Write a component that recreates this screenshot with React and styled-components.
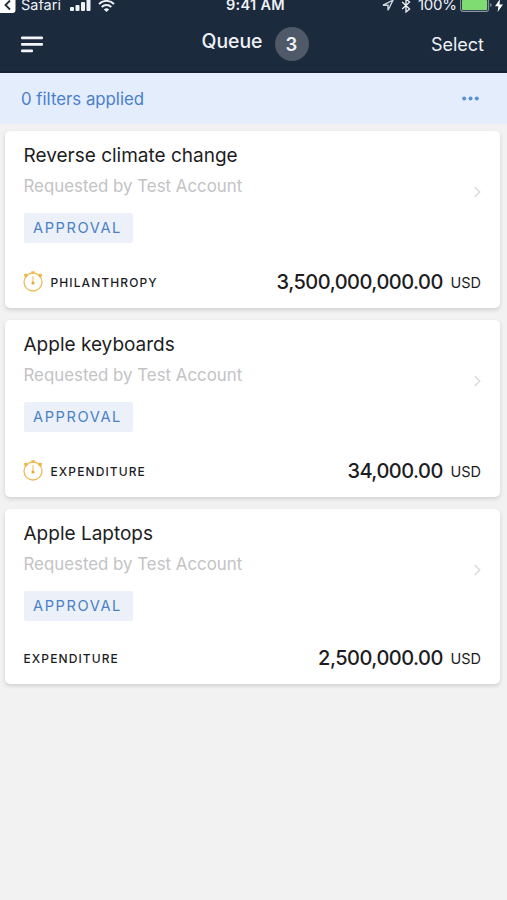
import styled, { createGlobalStyle } from 'styled-components';

const GlobalStyle = createGlobalStyle`
  * {
    box-sizing: border-box;
  }

  body {
    margin: 0;
    background: #f2f2f2;
    color: #1d1d1f;
    font-family: Inter, 'Liberation Sans', sans-serif;
  }

  svg {
    display: block;
    flex-shrink: 0;
  }
`;

const StyledPage = styled.div`
  min-height: 900px;
  overflow: hidden;
`;

const StyledHeader = styled.header`
  background: #1b2a3d;
  border-bottom: 2px solid #152233;
  color: #eef1f6;
  height: 73px;
`;

const StyledStatus = styled.div`
  align-items: center;
  display: grid;
  font-size: 15px;
  grid-template-columns: 226px 156px 1fr;
  grid-template-rows: 10px;
  height: 10px;
  line-height: 18px;
  white-space: nowrap;

  div {
    align-items: center;
    display: flex;
    height: 10px;
  }
`;

const StatusText = styled.span`
  font-size: ${({ $size }) => $size || 15}px;
  font-weight: ${({ $bold }) => ($bold ? 600 : 400)};
  letter-spacing: ${({ $spacing }) => $spacing || 0}px;
  margin-left: ${({ $left }) => $left || 0}px;
  width: ${({ $width }) => $width}px;
`;

const StatusIcon = styled.svg`
  margin-left: ${({ $left }) => $left || 0}px;
`;

const StyledNav = styled.nav`
  align-items: center;
  display: grid;
  grid-template-columns: 1fr auto 1fr;
  height: 58px;
  margin-top: 5px;
  padding: 0 23px 0 21px;
`;

const StyledTitle = styled.h1`
  align-items: center;
  display: flex;
  font-size: 19.4px;
  font-weight: 500;
  gap: 12px;
  line-height: 24px;
  margin: 0 0 0 5px;

  span {
    padding-bottom: 6px;
  }
`;

const Count = styled.b`
  background: #4f5967;
  border-radius: 50%;
  font-size: 18.5px;
  font-weight: 600;
  height: 34px;
  line-height: 34px;
  text-align: center;
  width: 34px;
`;

const SelectButton = styled.button`
  background: none;
  border: 0;
  color: inherit;
  font: 400 18px/24px Inter, sans-serif;
  justify-self: end;
  padding: 1px 0 0;
`;

const StyledFilters = styled.div`
  align-items: center;
  background: #e4edfc;
  color: #4a80cb;
  display: flex;
  font-size: 16.8px;
  height: 51px;
  justify-content: space-between;
  padding: 0 28px 0 21px;
`;

const StyledList = styled.main`
  display: grid;
  gap: 12px;
  padding: 7px 7px 0 5px;
`;

const StyledCard = styled.article`
  background: #fff;
  border-radius: 5px;
  box-shadow: 0 2px 4px rgba(0, 0, 0, 0.14);
  height: ${({ $short }) => ($short ? 175 : 177)}px;
  padding: 12px 19px 0 18.5px;
`;

const CardTop = styled.div`
  align-items: center;
  display: flex;
  height: 100px;
  justify-content: space-between;

  h2 {
    font-size: 19px;
    font-weight: 400;
    line-height: 24px;
    margin: 0;
  }

  p {
    color: #c3c3c5;
    font-size: 16.85px;
    line-height: 22px;
    margin: 7px 0 16px;
  }
`;

const Chevron = styled.svg`
  margin-bottom: 3px;
`;

const Tag = styled.span`
  background: #ebf0f9;
  border-radius: 2px;
  color: #4a80c4;
  display: block;
  font-size: 14.6px;
  height: 30px;
  letter-spacing: 1.6px;
  line-height: 30px;
  padding-left: 9.5px;
  width: 109px;
`;

const CardBottom = styled.div`
  align-items: center;
  display: flex;
  height: 24px;
  margin-top: ${({ $short }) => ($short ? 25 : 27)}px;
`;

const Category = styled.span`
  font-size: 12px;
  font-weight: 500;
  letter-spacing: 1.1px;
`;

const Amount = styled.strong`
  font-size: 20px;
  font-weight: 500;
  letter-spacing: -0.5px;
  margin-left: auto;
`;

const Currency = styled.span`
  font-size: 14.5px;
  font-weight: 400;
  margin-left: 7.5px;
`;

const requests = [
  {
    title: 'Reverse climate change',
    category: 'PHILANTHROPY',
    amount: '3,500,000,000.00',
    timed: true,
  },
  {
    title: 'Apple keyboards',
    category: 'EXPENDITURE',
    amount: '34,000.00',
    timed: true,
  },
  {
    title: 'Apple Laptops',
    category: 'EXPENDITURE',
    amount: '2,500,000.00',
    timed: false,
  },
];

const StyledStopwatch = styled.svg`
  margin: -2px 8px 0 -1px;
`;

const Stopwatch = () => (
  <StyledStopwatch width="20" height="22" viewBox="0 0 20 22" fill="none">
    <circle cx="10" cy="12" r="9" stroke="#edbc58" strokeWidth="1.3" />
    <path d="M10 6v6" stroke="#edbc58" strokeWidth="1" />
    <circle cx="10" cy="13" r="1.6" fill="#e5a935" />
    <path d="M8.3 2h3.4M10 2v2" stroke="#edb64c" strokeWidth="1.6" />
    <path d="M.8 4.4l2.6-.8 1.8 1.8-2.8 3zM19.2 4.4l-2.6-.8-1.8 1.8 2.8 3z" fill="#edb64c" />
  </StyledStopwatch>
);

const StatusBar = () => (
  <StyledStatus>
    <div>
      <StatusIcon width="16" height="18" viewBox="0 1 16 18">
        <rect x="-4" y="1" width="19.5" height="17" rx="3" fill="#fff" />
        <path d="M10 5.5L5.5 10l4.5 4.5" fill="none" stroke="#1b2a3d" strokeWidth="1.8" />
      </StatusIcon>
      <StatusText $left={5} $width={49} $size={14.5}>
        Safari
      </StatusText>
      <StatusIcon width="21" height="12" viewBox="0 0 21 12" fill="#eef1f6">
        <rect y="8" width="4" height="4" rx="1" />
        <rect x="5.5" y="6" width="4" height="6" rx="1" />
        <rect x="11" y="3" width="4" height="9" rx="1" />
        <rect x="16.5" width="4" height="12" rx="1" />
      </StatusIcon>
      <StatusIcon $left={7} width="17" height="13" viewBox="0 0 17 13" fill="none">
        <path d="M1 5a10.6 10.6 0 0 1 15 0M3.7 8a6.8 6.8 0 0 1 9.6 0" stroke="#eef1f6" strokeWidth="1.9" />
        <path d="M5.8 10.4a4 4 0 0 1 5.4 0L8.5 13z" fill="#eef1f6" />
      </StatusIcon>
    </div>
    <StatusText $bold $size={14.5} $spacing={0.3}>
      9:41 AM
    </StatusText>
    <div>
      <StatusIcon width="12" height="12" viewBox="0 0 12 12" fill="none">
        <path d="M1 6.2l10-5-5 10V6.2z" stroke="#cfd5dd" strokeWidth="1.4" />
      </StatusIcon>
      <StatusIcon $left={7} width="10" height="15" viewBox="0 0 10 15" fill="none">
        <path d="M1.2 4l7.4 7L5 14V1l3.6 3-7.4 7" stroke="#eef1f6" strokeWidth="1.3" />
      </StatusIcon>
      <StatusText $left={7} $width={42} $size={15} $spacing={-0.3}>
        100%
      </StatusText>
      <StatusIcon width="33" height="14" viewBox="0 0 33 14">
        <rect x="0.6" y="0.6" width="28" height="12.8" rx="2.5" fill="none" stroke="#8b949f" strokeWidth="1.1" />
        <rect x="2" y="2" width="25.2" height="10" rx="1" fill="#7fdc73" />
        <path d="M30.2 5v4q1.5-.5 1.5-2t-1.5-2z" fill="#8b949f" />
      </StatusIcon>
      <StatusIcon $left={2} width="8" height="13" viewBox="0 0 8 13">
        <path d="M5 0L0 7.2h3.4L2.6 13 8 5.4H4.5z" fill="#fff" />
      </StatusIcon>
    </div>
  </StyledStatus>
);

const Card = ({ title, category, amount, timed }) => (
  <StyledCard $short={!timed}>
    <CardTop>
      <div>
        <h2>{title}</h2>
        <p>Requested by Test Account</p>
        <Tag>APPROVAL</Tag>
      </div>
      <Chevron width="8" height="12" viewBox="0 0 8 12" fill="none">
        <path d="M1.7 1l5 5-5 5" stroke="#dcdcde" strokeWidth="1.6" />
      </Chevron>
    </CardTop>
    <CardBottom $short={!timed}>
      {timed && <Stopwatch />}
      <Category>{category}</Category>
      <Amount>{amount}</Amount>
      <Currency>USD</Currency>
    </CardBottom>
  </StyledCard>
);

const App = () => {
  return (
    <>
      <GlobalStyle />
      <StyledPage>
        <StyledHeader>
          <StatusBar />
          <StyledNav>
            <svg width="22" height="17" viewBox="0 0 22 17" fill="#f4f5f8">
              <rect y="0.5" width="22" height="2.8" rx="1" />
              <rect y="7" width="22" height="2.8" rx="1" />
              <rect y="13.5" width="12" height="2.8" rx="1" />
            </svg>
            <StyledTitle>
              <span>Queue</span>
              <Count>3</Count>
            </StyledTitle>
            <SelectButton>Select</SelectButton>
          </StyledNav>
        </StyledHeader>
        <StyledFilters>
          <span>0 filters applied</span>
          <svg width="17" height="5" viewBox="0 0 17 5" fill="#5b8fd6">
            <circle cx="2.2" cy="2.5" r="2" />
            <circle cx="8.5" cy="2.5" r="2" />
            <circle cx="14.8" cy="2.5" r="2" />
          </svg>
        </StyledFilters>
        <StyledList>
          {requests.map((request) => (
            <Card key={request.title} {...request} />
          ))}
        </StyledList>
      </StyledPage>
    </>
  );
};

export default App;
